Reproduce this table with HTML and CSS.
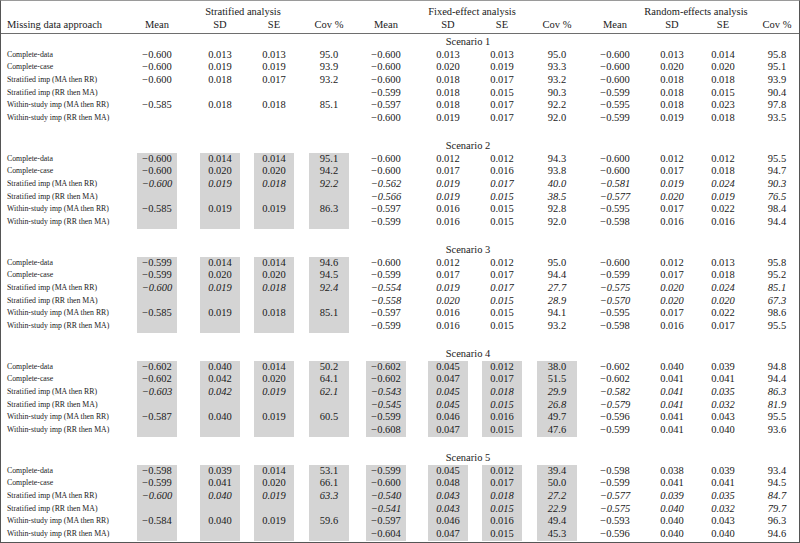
FILE: index.html
```html
<!DOCTYPE html>
<html lang="en">
<head>
<meta charset="utf-8">
<title>Missing data approaches</title>
<link rel="stylesheet" href="styles.css">
</head>
<body>
<div class="tbl">
  <div class="head">
    <div class="row hr">
      <div class="lab"></div>
      <div class="grp g-s">Stratified analysis</div>
      <div class="grp g-f">Fixed-effect analysis</div>
      <div class="grp g-r">Random-effects analysis</div>
    </div>
    <div class="row hr">
      <div class="lab hl">Missing data approach</div>
      <div class="v">Mean</div><div class="v">SD</div><div class="v">SE</div><div class="v">Cov %</div>
      <div class="v">Mean</div><div class="v">SD</div><div class="v">SE</div><div class="v">Cov %</div>
      <div class="v">Mean</div><div class="v">SD</div><div class="v">SE</div><div class="v">Cov %</div>
    </div>
  </div>
  <div class="body">
    <div class="block">
      <div class="row sc"><div class="lab"></div><div class="scn">Scenario 1</div></div>
      <div class="row d"><div class="lab">Complete-data</div><div class="v">−0.600</div><div class="v">0.013</div><div class="v">0.013</div><div class="v">95.0</div><div class="v">−0.600</div><div class="v">0.013</div><div class="v">0.013</div><div class="v">95.0</div><div class="v">−0.600</div><div class="v">0.013</div><div class="v">0.014</div><div class="v">95.8</div></div>
      <div class="row d"><div class="lab">Complete-case</div><div class="v">−0.600</div><div class="v">0.019</div><div class="v">0.019</div><div class="v">93.9</div><div class="v">−0.600</div><div class="v">0.020</div><div class="v">0.019</div><div class="v">93.3</div><div class="v">−0.600</div><div class="v">0.020</div><div class="v">0.020</div><div class="v">95.1</div></div>
      <div class="row d"><div class="lab">Stratified imp (MA then RR)</div><div class="v">−0.600</div><div class="v">0.018</div><div class="v">0.017</div><div class="v">93.2</div><div class="v">−0.600</div><div class="v">0.018</div><div class="v">0.017</div><div class="v">93.2</div><div class="v">−0.600</div><div class="v">0.018</div><div class="v">0.018</div><div class="v">93.9</div></div>
      <div class="row d"><div class="lab">Stratified imp (RR then MA)</div><div class="v"></div><div class="v"></div><div class="v"></div><div class="v"></div><div class="v">−0.599</div><div class="v">0.018</div><div class="v">0.015</div><div class="v">90.3</div><div class="v">−0.599</div><div class="v">0.018</div><div class="v">0.015</div><div class="v">90.4</div></div>
      <div class="row d"><div class="lab">Within-study imp (MA then RR)</div><div class="v">−0.585</div><div class="v">0.018</div><div class="v">0.018</div><div class="v">85.1</div><div class="v">−0.597</div><div class="v">0.018</div><div class="v">0.017</div><div class="v">92.2</div><div class="v">−0.595</div><div class="v">0.018</div><div class="v">0.023</div><div class="v">97.8</div></div>
      <div class="row d"><div class="lab">Within-study imp (RR then MA)</div><div class="v"></div><div class="v"></div><div class="v"></div><div class="v"></div><div class="v">−0.600</div><div class="v">0.019</div><div class="v">0.017</div><div class="v">92.0</div><div class="v">−0.599</div><div class="v">0.019</div><div class="v">0.018</div><div class="v">93.5</div></div>
    </div>

    <div class="block sh-s">
      <div class="row sc"><div class="lab"></div><div class="scn">Scenario 2</div></div>
      <div class="row d"><div class="lab">Complete-data</div><div class="v">−0.600</div><div class="v">0.014</div><div class="v">0.014</div><div class="v">95.1</div><div class="v">−0.600</div><div class="v">0.012</div><div class="v">0.012</div><div class="v">94.3</div><div class="v">−0.600</div><div class="v">0.012</div><div class="v">0.012</div><div class="v">95.5</div></div>
      <div class="row d"><div class="lab">Complete-case</div><div class="v">−0.600</div><div class="v">0.020</div><div class="v">0.020</div><div class="v">94.2</div><div class="v">−0.600</div><div class="v">0.017</div><div class="v">0.016</div><div class="v">93.8</div><div class="v">−0.600</div><div class="v">0.017</div><div class="v">0.018</div><div class="v">94.7</div></div>
      <div class="row d it"><div class="lab">Stratified imp (MA then RR)</div><div class="v">−0.600</div><div class="v">0.019</div><div class="v">0.018</div><div class="v">92.2</div><div class="v">−0.562</div><div class="v">0.019</div><div class="v">0.017</div><div class="v">40.0</div><div class="v">−0.581</div><div class="v">0.019</div><div class="v">0.024</div><div class="v">90.3</div></div>
      <div class="row d it"><div class="lab">Stratified imp (RR then MA)</div><div class="v"></div><div class="v"></div><div class="v"></div><div class="v"></div><div class="v">−0.566</div><div class="v">0.019</div><div class="v">0.015</div><div class="v">38.5</div><div class="v">−0.577</div><div class="v">0.020</div><div class="v">0.019</div><div class="v">76.5</div></div>
      <div class="row d"><div class="lab">Within-study imp (MA then RR)</div><div class="v">−0.585</div><div class="v">0.019</div><div class="v">0.019</div><div class="v">86.3</div><div class="v">−0.597</div><div class="v">0.016</div><div class="v">0.015</div><div class="v">92.8</div><div class="v">−0.595</div><div class="v">0.017</div><div class="v">0.022</div><div class="v">98.4</div></div>
      <div class="row d"><div class="lab">Within-study imp (RR then MA)</div><div class="v"></div><div class="v"></div><div class="v"></div><div class="v"></div><div class="v">−0.599</div><div class="v">0.016</div><div class="v">0.015</div><div class="v">92.0</div><div class="v">−0.598</div><div class="v">0.016</div><div class="v">0.016</div><div class="v">94.4</div></div>
    </div>

    <div class="block sh-s">
      <div class="row sc"><div class="lab"></div><div class="scn">Scenario 3</div></div>
      <div class="row d"><div class="lab">Complete-data</div><div class="v">−0.599</div><div class="v">0.014</div><div class="v">0.014</div><div class="v">94.6</div><div class="v">−0.600</div><div class="v">0.012</div><div class="v">0.012</div><div class="v">95.0</div><div class="v">−0.600</div><div class="v">0.012</div><div class="v">0.013</div><div class="v">95.8</div></div>
      <div class="row d"><div class="lab">Complete-case</div><div class="v">−0.599</div><div class="v">0.020</div><div class="v">0.020</div><div class="v">94.5</div><div class="v">−0.599</div><div class="v">0.017</div><div class="v">0.017</div><div class="v">94.4</div><div class="v">−0.599</div><div class="v">0.017</div><div class="v">0.018</div><div class="v">95.2</div></div>
      <div class="row d it"><div class="lab">Stratified imp (MA then RR)</div><div class="v">−0.600</div><div class="v">0.019</div><div class="v">0.018</div><div class="v">92.4</div><div class="v">−0.554</div><div class="v">0.019</div><div class="v">0.017</div><div class="v">27.7</div><div class="v">−0.575</div><div class="v">0.020</div><div class="v">0.024</div><div class="v">85.1</div></div>
      <div class="row d it"><div class="lab">Stratified imp (RR then MA)</div><div class="v"></div><div class="v"></div><div class="v"></div><div class="v"></div><div class="v">−0.558</div><div class="v">0.020</div><div class="v">0.015</div><div class="v">28.9</div><div class="v">−0.570</div><div class="v">0.020</div><div class="v">0.020</div><div class="v">67.3</div></div>
      <div class="row d"><div class="lab">Within-study imp (MA then RR)</div><div class="v">−0.585</div><div class="v">0.019</div><div class="v">0.018</div><div class="v">85.1</div><div class="v">−0.597</div><div class="v">0.016</div><div class="v">0.015</div><div class="v">94.1</div><div class="v">−0.595</div><div class="v">0.017</div><div class="v">0.022</div><div class="v">98.6</div></div>
      <div class="row d"><div class="lab">Within-study imp (RR then MA)</div><div class="v"></div><div class="v"></div><div class="v"></div><div class="v"></div><div class="v">−0.599</div><div class="v">0.016</div><div class="v">0.015</div><div class="v">93.2</div><div class="v">−0.598</div><div class="v">0.016</div><div class="v">0.017</div><div class="v">95.5</div></div>
    </div>

    <div class="block sh-s sh-f">
      <div class="row sc"><div class="lab"></div><div class="scn">Scenario 4</div></div>
      <div class="row d"><div class="lab">Complete-data</div><div class="v">−0.602</div><div class="v">0.040</div><div class="v">0.014</div><div class="v">50.2</div><div class="v">−0.602</div><div class="v">0.045</div><div class="v">0.012</div><div class="v">38.0</div><div class="v">−0.602</div><div class="v">0.040</div><div class="v">0.039</div><div class="v">94.8</div></div>
      <div class="row d"><div class="lab">Complete-case</div><div class="v">−0.602</div><div class="v">0.042</div><div class="v">0.020</div><div class="v">64.1</div><div class="v">−0.602</div><div class="v">0.047</div><div class="v">0.017</div><div class="v">51.5</div><div class="v">−0.602</div><div class="v">0.041</div><div class="v">0.041</div><div class="v">94.4</div></div>
      <div class="row d it"><div class="lab">Stratified imp (MA then RR)</div><div class="v">−0.603</div><div class="v">0.042</div><div class="v">0.019</div><div class="v">62.1</div><div class="v">−0.543</div><div class="v">0.045</div><div class="v">0.018</div><div class="v">29.9</div><div class="v">−0.582</div><div class="v">0.041</div><div class="v">0.035</div><div class="v">86.3</div></div>
      <div class="row d it"><div class="lab">Stratified imp (RR then MA)</div><div class="v"></div><div class="v"></div><div class="v"></div><div class="v"></div><div class="v">−0.545</div><div class="v">0.045</div><div class="v">0.015</div><div class="v">26.8</div><div class="v">−0.579</div><div class="v">0.041</div><div class="v">0.032</div><div class="v">81.9</div></div>
      <div class="row d"><div class="lab">Within-study imp (MA then RR)</div><div class="v">−0.587</div><div class="v">0.040</div><div class="v">0.019</div><div class="v">60.5</div><div class="v">−0.599</div><div class="v">0.046</div><div class="v">0.016</div><div class="v">49.7</div><div class="v">−0.596</div><div class="v">0.041</div><div class="v">0.043</div><div class="v">95.5</div></div>
      <div class="row d"><div class="lab">Within-study imp (RR then MA)</div><div class="v"></div><div class="v"></div><div class="v"></div><div class="v"></div><div class="v">−0.608</div><div class="v">0.047</div><div class="v">0.015</div><div class="v">47.6</div><div class="v">−0.599</div><div class="v">0.041</div><div class="v">0.040</div><div class="v">93.6</div></div>
    </div>

    <div class="block sh-s sh-f">
      <div class="row sc"><div class="lab"></div><div class="scn">Scenario 5</div></div>
      <div class="row d"><div class="lab">Complete-data</div><div class="v">−0.598</div><div class="v">0.039</div><div class="v">0.014</div><div class="v">53.1</div><div class="v">−0.599</div><div class="v">0.045</div><div class="v">0.012</div><div class="v">39.4</div><div class="v">−0.598</div><div class="v">0.038</div><div class="v">0.039</div><div class="v">93.4</div></div>
      <div class="row d"><div class="lab">Complete-case</div><div class="v">−0.599</div><div class="v">0.041</div><div class="v">0.020</div><div class="v">66.1</div><div class="v">−0.600</div><div class="v">0.048</div><div class="v">0.017</div><div class="v">50.0</div><div class="v">−0.599</div><div class="v">0.041</div><div class="v">0.041</div><div class="v">94.5</div></div>
      <div class="row d it"><div class="lab">Stratified imp (MA then RR)</div><div class="v">−0.600</div><div class="v">0.040</div><div class="v">0.019</div><div class="v">63.3</div><div class="v">−0.540</div><div class="v">0.043</div><div class="v">0.018</div><div class="v">27.2</div><div class="v">−0.577</div><div class="v">0.039</div><div class="v">0.035</div><div class="v">84.7</div></div>
      <div class="row d it"><div class="lab">Stratified imp (RR then MA)</div><div class="v"></div><div class="v"></div><div class="v"></div><div class="v"></div><div class="v">−0.541</div><div class="v">0.043</div><div class="v">0.015</div><div class="v">22.9</div><div class="v">−0.575</div><div class="v">0.040</div><div class="v">0.032</div><div class="v">79.7</div></div>
      <div class="row d"><div class="lab">Within-study imp (MA then RR)</div><div class="v">−0.584</div><div class="v">0.040</div><div class="v">0.019</div><div class="v">59.6</div><div class="v">−0.597</div><div class="v">0.046</div><div class="v">0.016</div><div class="v">49.4</div><div class="v">−0.593</div><div class="v">0.040</div><div class="v">0.043</div><div class="v">96.3</div></div>
      <div class="row d"><div class="lab">Within-study imp (RR then MA)</div><div class="v"></div><div class="v"></div><div class="v"></div><div class="v"></div><div class="v">−0.604</div><div class="v">0.047</div><div class="v">0.015</div><div class="v">45.3</div><div class="v">−0.596</div><div class="v">0.040</div><div class="v">0.040</div><div class="v">94.6</div></div>
    </div>
  </div>
</div>
</body>
</html>
```

FILE: styles.css
```css
* {
  box-sizing: border-box;
  margin: 0;
  padding: 0;
}

html, body {
  background: #ffffff;
}

body {
  width: 800px;
  height: 543px;
  overflow: hidden;
  font-family: "Liberation Serif", "Times New Roman", serif;
  color: #1a1a1a;
}

.tbl {
  width: 800px;
  height: 543px;
  border: 1px solid #555555;
  border-top-color: #9a9a9a;
}

.row {
  display: grid;
  grid-template-columns: 136px 63px 54px 55px 57px 62px 54px 55px 58px 57px 51px 54px 42px;
  height: 12.7px;
  line-height: 12.7px;
  font-size: 10.5px;
  white-space: nowrap;
}

.v {
  width: 40px;
  text-align: center;
}

.lab {
  font-size: 7.8px;
  padding-left: 6px;
}

.head {
  padding-top: 4px;
  padding-bottom: 2px;
  border-bottom: 1px solid #6e6e6e;
}

.head .row {
  height: 13px;
  line-height: 13px;
}

.lab.hl {
  font-size: 10.5px;
}

.grp {
  text-align: center;
  padding-right: 17px;
}

.g-s { grid-column: 2 / span 4; }
.g-f { grid-column: 6 / span 4; }
.g-r { grid-column: 10 / span 4; padding-right: 2px; }

.body {
  padding-top: 2px;
}

.block {
  margin-bottom: 15.2px;
}

.block:last-child {
  margin-bottom: 0;
}

.scn {
  grid-column: 2 / -1;
  text-align: center;
}

.it .v {
  font-style: italic;
}

.sh-s .d .v:nth-child(n+2):nth-child(-n+5),
.sh-f .d .v:nth-child(n+6):nth-child(-n+9) {
  background: #d4d4d4;
}
```
